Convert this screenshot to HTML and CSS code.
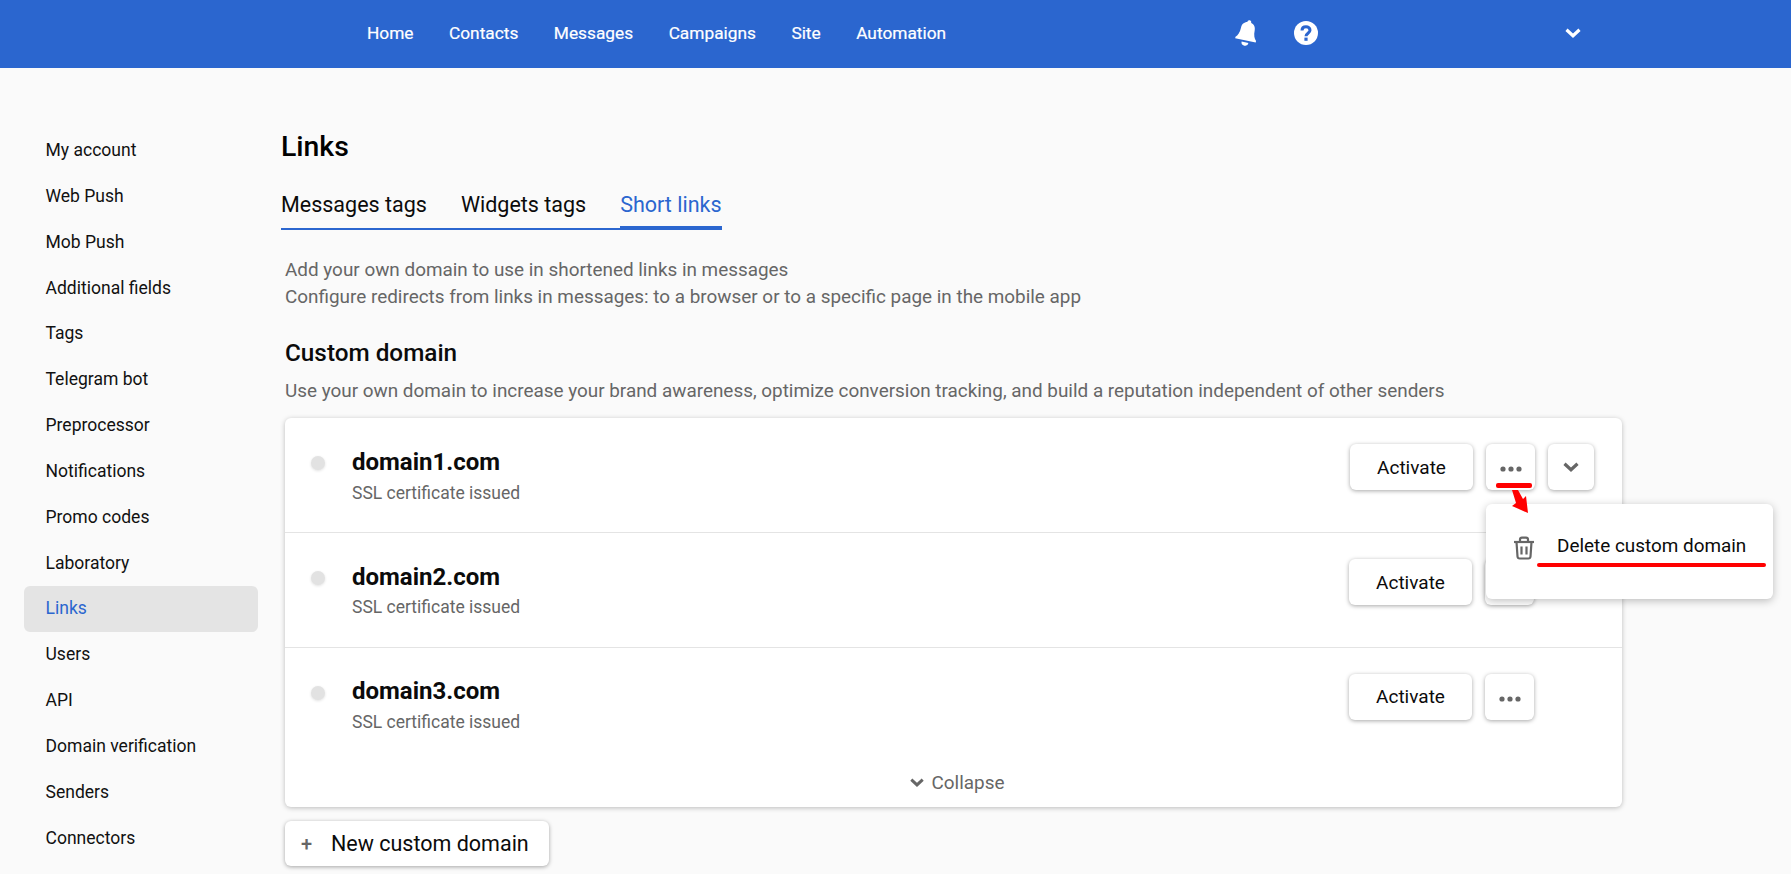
FILE: index.html
```html
<!DOCTYPE html>
<html lang="en">
<head>
<meta charset="utf-8">
<title>Links</title>
<link rel="stylesheet" href="styles.css">
</head>
<body>
<header class="topbar">
  <nav class="topnav">
    <a>Home</a><a>Contacts</a><a>Messages</a><a>Campaigns</a><a>Site</a><a>Automation</a>
  </nav>
  <div class="top-icons">
    <svg class="bell" viewBox="0 0 24 28" width="24" height="28"><g transform="rotate(12 12 14)"><circle cx="12" cy="3" r="2" fill="#fff"/><path fill="#fff" d="M12 3c-4.500 0-7 3-7 7 0 5-1.500 8-3.500 10v1.500h21V20c-2-2-3.500-5-3.500-10 0-4-2.500-7-7-7z"/><path fill="#fff" d="M8.500 23.500a3.500 3.500 0 0 0 7 0z"/></g></svg>
    <svg class="help" viewBox="0 0 24 24" width="24" height="24"><circle cx="12" cy="12" r="12" fill="#fff"/><path fill="none" stroke="#2b66cf" stroke-width="3" d="M8 9.500c0-2.500 1.800-3.700 4-3.700s4 1.300 4 3.400c0 3-4 3-4 6"/><rect x="10.400" y="16.600" width="3.200" height="3.200" fill="#2b66cf"/></svg>
    <svg class="chev-top" viewBox="0 0 16 10" width="16" height="10"><path fill="none" stroke="#fff" stroke-width="3.200" d="M1.500 1.800 8 7.800l6.500-6"/></svg>
  </div>
</header>

<div class="layout">
  <aside class="sidebar">
    <a class="side-item">My account</a>
    <a class="side-item">Web Push</a>
    <a class="side-item">Mob Push</a>
    <a class="side-item">Additional fields</a>
    <a class="side-item">Tags</a>
    <a class="side-item">Telegram bot</a>
    <a class="side-item">Preprocessor</a>
    <a class="side-item">Notifications</a>
    <a class="side-item">Promo codes</a>
    <a class="side-item">Laboratory</a>
    <a class="side-item active">Links</a>
    <a class="side-item">Users</a>
    <a class="side-item">API</a>
    <a class="side-item">Domain verification</a>
    <a class="side-item">Senders</a>
    <a class="side-item">Connectors</a>
  </aside>

  <main class="content">
    <h1 class="title">Links</h1>
    <div class="tabs">
      <a class="tab">Messages tags</a>
      <a class="tab">Widgets tags</a>
      <a class="tab on">Short links</a>
    </div>
    <div class="inner">
      <p class="lead">Add your own domain to use in shortened links in messages<br>Configure redirects from links in messages: to a browser or to a specific page in the mobile app</p>
      <h2 class="section">Custom domain</h2>
      <p class="section-sub">Use your own domain to increase your brand awareness, optimize conversion tracking, and build a reputation independent of other senders</p>

      <section class="card">
        <div class="row first">
          <span class="dot"></span>
          <div class="info"><div class="name">domain1.com</div><div class="status">SSL certificate issued</div></div>
          <div class="actions">
            <button class="btn activate">Activate</button>
            <button class="btn square"><svg class="dots" viewBox="0 0 22 6" width="22" height="6"><circle cx="3" cy="3" r="2.600" fill="#666"/><circle cx="11" cy="3" r="2.600" fill="#666"/><circle cx="19" cy="3" r="2.600" fill="#666"/></svg></button>
            <button class="btn square narrow"><svg viewBox="0 0 16 10" width="16" height="10"><path fill="none" stroke="#666" stroke-width="3.200" d="M1.500 1.800 8 7.800l6.500-6"/></svg></button>
          </div>
        </div>
        <div class="row middle">
          <span class="dot"></span>
          <div class="info"><div class="name">domain2.com</div><div class="status">SSL certificate issued</div></div>
          <div class="actions second">
            <button class="btn activate">Activate</button>
            <button class="btn square"></button>
          </div>
        </div>
        <div class="row last">
          <span class="dot"></span>
          <div class="info"><div class="name">domain3.com</div><div class="status">SSL certificate issued</div></div>
          <div class="actions second">
            <button class="btn activate">Activate</button>
            <button class="btn square"><svg class="dots" viewBox="0 0 22 6" width="22" height="6"><circle cx="3" cy="3" r="2.600" fill="#666"/><circle cx="11" cy="3" r="2.600" fill="#666"/><circle cx="19" cy="3" r="2.600" fill="#666"/></svg></button>
          </div>
        </div>
        <div class="collapse"><svg viewBox="0 0 16 10" width="14" height="9"><path fill="none" stroke="#666" stroke-width="3.400" d="M1.500 1.800 8 7.800l6.500-6"/></svg><span>Collapse</span></div>
      </section>

      <button class="btn new"><span class="plus">+</span>New custom domain</button>
    </div>
  </main>
</div>

<div class="menu">
  <svg class="trash" viewBox="0 0 22 24" width="22" height="24"><g fill="none" stroke="#666" stroke-width="2.200"><path d="M1 6h20"/><path d="M7 6V3.500C7 2.400 7.800 1.600 9 1.600h4c1.200 0 2 .8 2 1.900V6"/><path d="M3.500 6l1 14.500c.1 1.200 1 2 2.200 2h8.600c1.200 0 2.100-.8 2.200-2L18.500 6"/><path d="M8.500 10.500v8M13.500 10.500v8"/></g></svg>
  <span>Delete custom domain</span>
</div>
<span class="mark mark-short"></span>
<span class="mark mark-long"></span>
<svg class="mark-arrow" viewBox="0 0 20 26" width="20" height="26"><path fill="#f00" d="M1 0h6l5 9 3-3 2 17-16-7 4-3z"/></svg>
</body>
</html>
```
FILE: styles.css
```css
* { box-sizing: border-box; }
html, body { margin: 0; height: 874px; overflow: hidden; }
body { background: #fafafa; font-family: Roboto, "Liberation Sans", sans-serif; color: #0b0b0b; position: relative; }

.topbar { height: 68px; background: #2b66cf; display: flex; align-items: center; padding-left: 367px; color: #fff; }
.topnav { display: flex; gap: 35.5px; width: 868px; font-size: 17.3px; margin-top: -2px; }
.topnav a { color: #fff; -webkit-text-stroke: 0.2px #fff; }
.top-icons { display: flex; align-items: center; margin-top: -3px; }
.bell { margin-right: 35px; }
.help { margin-right: 247px; }

.layout { display: flex; }
.sidebar { width: 234px; margin-left: 24px; padding-top: 60px; display: flex; flex-direction: column; flex: none; }
.side-item { height: 45.85px; line-height: 45.85px; padding-left: 21.5px; font-size: 17.55px; border-radius: 6px; color: #111; white-space: nowrap; }
.side-item.active { background: #e4e4e4; color: #2b66cf; }

.content { flex: 1; padding: 55px 0 0 23px; min-width: 0; }
.title { margin: 0; font-size: 28.4px; line-height: 48px; font-weight: 500; color: #000; height: 48px; }
.tabs { display: inline-flex; gap: 34px; border-bottom: 2px solid #2b66cf; margin-top: 9px; height: 50px; vertical-align: top; }
.tab { font-size: 21.5px; line-height: 50px; height: 50px; color: #0b0b0b; }
.tab.on { color: #2b66cf; border-bottom: 4px solid #2b66cf; }
.inner { padding-left: 4px; width: 1341px; }
.lead { margin: 26px 0 0; font-size: 18.9px; line-height: 27px; color: #666; }
.section { margin: 27px 0 0; font-size: 24.3px; line-height: 32px; font-weight: 500; color: #0b0b0b; }
.section-sub { margin: 8px 0 0; font-size: 18.9px; line-height: 28px; color: #666; white-space: nowrap; }

.card { margin-top: 13px; width: 1337px; height: 389px; background: #fff; border-radius: 6px; box-shadow: 0 1px 5px rgba(0,0,0,.25); }
.row { height: 115px; display: flex; align-items: flex-start; border-bottom: 1px solid #e4e4e4; padding-left: 26px; position: relative; }
.row.middle { height: 114.5px; }
.row.last { border-bottom: 0; height: 110px; }
.dot { width: 14px; height: 14px; margin-top: 38px; border-radius: 50%; background: #e2e2e2; box-shadow: 0 1px 3px rgba(0,0,0,.12); flex: none; }
.info { margin-left: 27px; padding-top: 28px; }
.row.last .info { padding-top: 27px; }
.name { font-size: 24px; line-height: 32px; font-weight: 700; color: #0b0b0b; }
.status { font-size: 17.5px; line-height: 26px; color: #666; margin-top: 2px; }
.row.middle .status { margin-top: 1px; }
.actions { margin-left: auto; display: flex; gap: 13px; padding-top: 26px; padding-right: 28px; }
.actions.second { padding-right: 88px; padding-top: 26px; }
.btn { height: 46px; background: #fff; border: 0; border-radius: 6px; box-shadow: 0 1px 4px rgba(0,0,0,.35); font: 19px Roboto, sans-serif; color: #0b0b0b; display: flex; align-items: center; justify-content: center; padding: 0; }
.dots { margin-top: 4px; }
.activate { width: 123px; }
.square { width: 49px; }
.square.narrow { width: 46px; }
.collapse { display: flex; align-items: center; justify-content: center; gap: 8px; font-size: 18.9px; color: #666; height: 46px; margin-top: 2px; padding-left: 7px; }

.new { width: 264px; height: 45px; margin-top: 14px; font-size: 21.5px; justify-content: flex-start; padding-left: 16px; }
.plus { color: #666; font-size: 20px; font-weight: 500; width: 30px; text-align: left; }

.menu { position: absolute; left: 1486px; top: 504px; width: 287px; height: 95px; background: #fff; border-radius: 6px; box-shadow: 0 2px 8px rgba(0,0,0,.25); display: flex; align-items: flex-start; padding: 31px 0 0 27px; font-size: 18.9px; color: #0b0b0b; }
.menu span { margin-left: 22px; line-height: 22px; }
.trash { flex: none; margin-top: 1px; }
.mark { position: absolute; background: #f00; border-radius: 2px; }
.mark-short { left: 1496px; top: 483px; width: 36px; height: 5px; }
.mark-long { left: 1537px; top: 563px; width: 229px; height: 4px; }
.mark-arrow { position: absolute; left: 1511px; top: 490px; }
```
